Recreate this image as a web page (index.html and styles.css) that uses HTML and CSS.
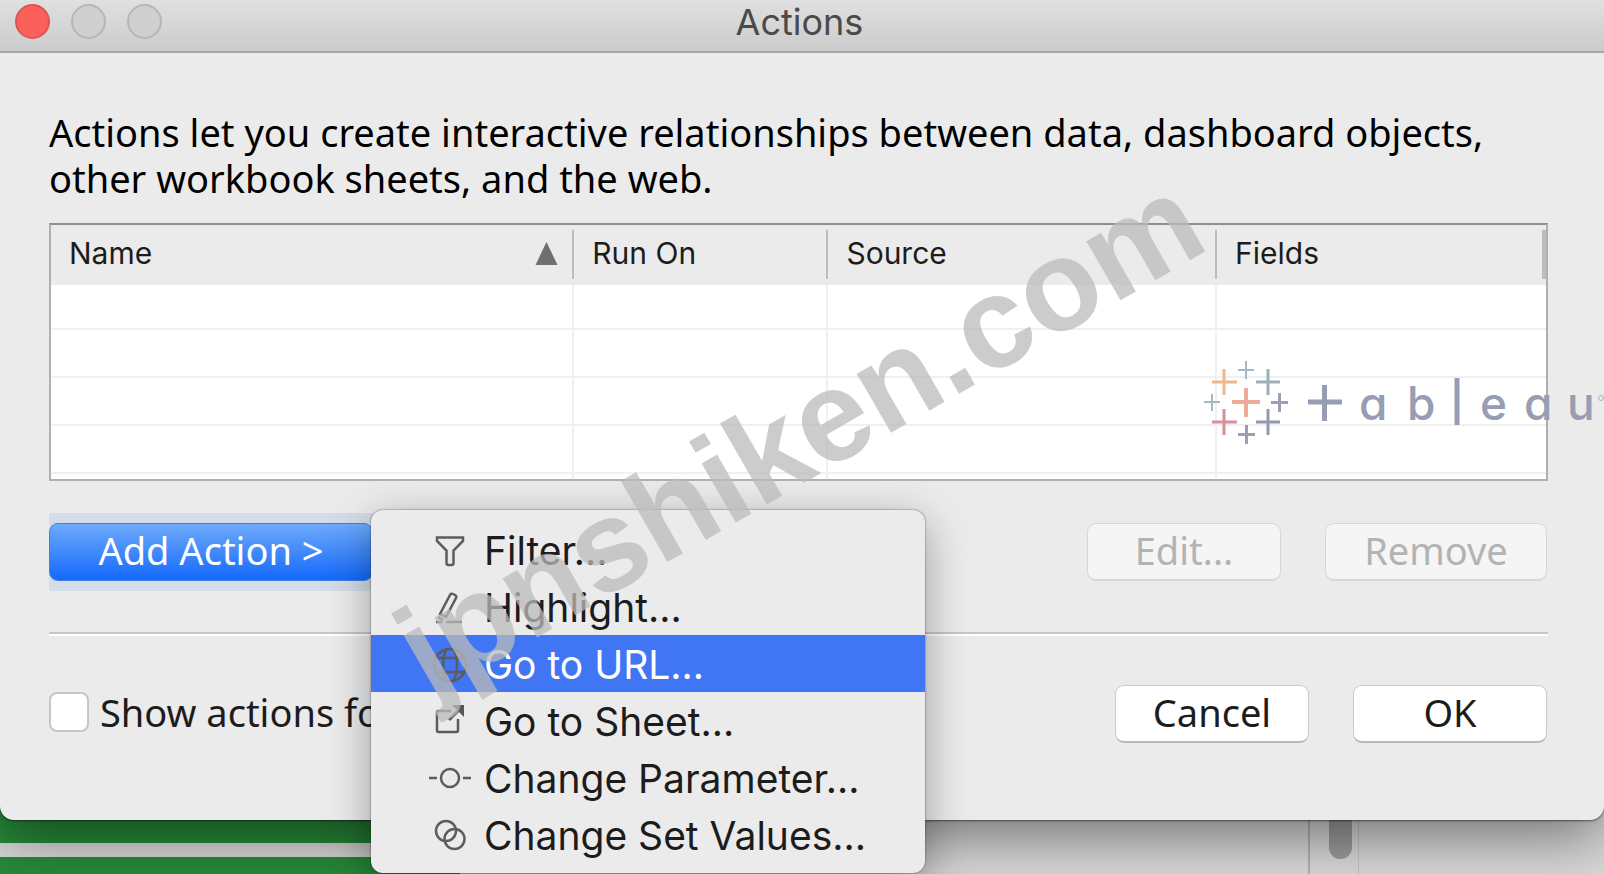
FILE: index.html
```html
<!DOCTYPE html>
<html lang="en">
<head>
<meta charset="utf-8">
<title>Actions</title>
<link rel="stylesheet" href="styles.css">
</head>
<body>
<div class="screen">
  <main class="window">
    <header class="titlebar">
      <div class="lights">
        <button class="light light-close" type="button" aria-label="Close"></button>
        <button class="light" type="button" aria-label="Minimize" disabled></button>
        <button class="light" type="button" aria-label="Zoom" disabled></button>
      </div>
      <h1 class="title">Actions</h1>
    </header>
    <div class="content">
      <p class="intro">Actions let you create interactive relationships between data, dashboard objects,<br>other workbook sheets, and the web.</p>
      <table class="actions">
        <colgroup><col class="col-name"><col class="col-run"><col class="col-source"><col class="col-fields"></colgroup>
        <thead>
          <tr>
            <th scope="col"><span class="sorted">Name <svg width="23" height="23" viewBox="0 0 23 23" aria-hidden="true"><path d="M11.500 0L22.500 23H.5z" fill="#6f6f6f"/></svg></span></th>
            <th scope="col">Run On</th>
            <th scope="col">Source</th>
            <th scope="col">Fields</th>
          </tr>
        </thead>
        <tbody>
          <tr class="short"><td></td><td></td><td></td><td></td></tr>
          <tr><td></td><td></td><td></td><td></td></tr>
          <tr><td></td><td></td><td></td><td></td></tr>
          <tr><td></td><td></td><td></td><td></td></tr>
          <tr class="last"><td></td><td></td><td></td><td></td></tr>
        </tbody>
      </table>
      <div class="toolbar">
        <div class="add">
          <button class="btn btn-primary" type="button">Add Action &gt;</button>
          <div class="menu" role="menu">
            <button class="item" type="button" role="menuitem">
              <svg class="icon" viewBox="0 0 44 44" aria-hidden="true"><path d="M9 8.500h26v3.500l-9.500 9.500V34q0 2-2 2h-3q-2 0-2-2V21.500L9 12z"/></svg>
              <span>Filter...</span></button>
            <button class="item" type="button" role="menuitem">
              <svg class="icon" viewBox="0 0 44 44" aria-hidden="true"><path d="M12 28l10-19q1-2 3-1l2 1q2 1 1 3L18 31zM10 31l5 3M8 36h6M18 36h16"/></svg>
              <span>Highlight...</span></button>
            <button class="item item-active" type="button" role="menuitem">
              <svg class="icon" viewBox="0 0 44 44" aria-hidden="true"><circle cx="22" cy="22" r="16"/><path d="M8 15h28M8 29h28M18 6.500q-6 15.500 0 31M26 6.500q6 15.500 0 31"/></svg>
              <span>Go to URL...</span></button>
            <button class="item" type="button" role="menuitem">
              <svg class="icon" viewBox="0 0 44 44" aria-hidden="true"><path d="M23 11H10.500q-1.500 0-1.500 1.500v18q0 1.500 1.500 1.500h18q1.500 0 1.500-1.500V19"/><path d="M21 20L32 9" stroke-width="3"/><path d="M24 5h12v12z" fill="#555" stroke="none"/></svg>
              <span>Go to Sheet...</span></button>
            <button class="item" type="button" role="menuitem">
              <svg class="icon" viewBox="0 0 44 44" aria-hidden="true"><circle cx="22" cy="21" r="9"/><path d="M1 21h8M35 21h8"/></svg>
              <span>Change Parameter...</span></button>
            <button class="item" type="button" role="menuitem">
              <svg class="icon" viewBox="0 0 44 44" aria-hidden="true"><circle cx="18" cy="17" r="10"/><circle cx="26.500" cy="25" r="10"/></svg>
              <span>Change Set Values...</span></button>
          </div>
        </div>
        <div class="group">
          <button class="btn" type="button" disabled>Edit...</button>
          <button class="btn btn-wide" type="button" disabled>Remove</button>
        </div>
      </div>
      <hr class="rule">
      <div class="footer">
        <label class="check"><input type="checkbox"><span>Show actions for</span></label>
        <div class="group">
          <button class="btn" type="button">Cancel</button>
          <button class="btn" type="button">OK</button>
        </div>
      </div>
    </div>
  </main>
  <div class="behind">
    <div class="bands"><div class="band-top"></div><div class="band-bottom"></div></div>
    <div class="track"><div class="thumb"></div></div>
  </div>
  <svg class="logo" width="400" height="100" viewBox="1204 352 400 100" role="img" aria-label="tableau">
    <g fill="none">
      <path stroke="#a6b9c0" stroke-width="2" d="M1238 370h16M1246 361v18M1204 402h16M1212 394v17"/>
      <path stroke="#efb78f" stroke-width="3" d="M1212 382h25M1224 369v26"/>
      <path stroke="#9db0b9" stroke-width="3" d="M1256 382h24M1268 369v26"/>
      <path stroke="#f0ab97" stroke-width="4" d="M1232 402h28M1246 388v29"/>
      <path stroke="#9b9fb6" stroke-width="3" d="M1271 402.500h17M1279.500 393v19M1238 434.500h17M1246.500 425v19"/>
      <path stroke="#d79098" stroke-width="3" d="M1212 422h25M1224 409v26"/>
      <path stroke="#9299b1" stroke-width="3" d="M1256 422h24M1268 409v26"/>
      <path stroke="#979db2" stroke-width="5" d="M1308 402h34M1324.500 385v36M1457 378v47"/>
      <circle cx="1601" cy="398" r="2.500" stroke="#a9aec0"/>
    </g>
    <text class="wordmark" x="1359 1407 1480 1524 1567" y="420">abeau</text>
  </svg>
  <div class="watermark">jpnshiken.com</div>
</div>
</body>
</html>
```
FILE: styles.css
```css
* { box-sizing: border-box; }
body { margin: 0; background: #c8c8c8; }
button, input { font: inherit; margin: 0; }

.screen {
  position: relative;
  display: flex;
  flex-direction: column;
  height: 100vh;
  overflow: hidden;
  font-family: "Noto Sans", "Open Sans", sans-serif;
  font-size: 38px;
  color: #1c1c1c;
}

.window {
  position: relative;
  z-index: 1;
  flex: none;
  background: #ebebeb;
  border-radius: 0 0 14px 14px;
  box-shadow: 0 1px 2px rgba(0, 0, 0, .5), 0 14px 60px rgba(0, 0, 0, .5);
}

.titlebar {
  display: grid;
  grid-template-columns: 1fr auto 1fr;
  align-items: center;
  height: 53px;
  padding: 0 20px 8px 15px;
  background: linear-gradient(#e0e0e0, #cbcbcb);
  border-bottom: 2px solid #a6a6a6;
}
.lights { display: flex; gap: 21px; }
.light {
  width: 35px;
  height: 35px;
  padding: 0;
  border: 2px solid #b6b6b6;
  border-radius: 50%;
  background: #cfcfcf;
}
.light-close { background: #fc605b; border-color: #dd5550; }
.title {
  margin: 0;
  font: 400 36px/40px Inter, sans-serif;
  color: #4a4a4a;
}

.content { padding: 56px 56px 77px 49px; }
.intro { margin: 0; line-height: 46px; color: #000; }

.actions {
  width: 100%;
  margin-top: 22px;
  table-layout: fixed;
  border-collapse: separate;
  border-spacing: 0;
  border: 2px solid #b0b0b0;
  border-top-color: #8e8e8e;
  background: #fff;
}
.col-name { width: 35%; }
.col-run { width: 17%; }
.col-source { width: 26%; }
.col-fields { width: 22%; }
.actions th {
  height: 60px;
  padding: 0 16px 4px 18px;
  text-align: left;
  font: 400 30px/36px Inter, sans-serif;
  background: linear-gradient(#bdbdbd, #bdbdbd) right 5px / 2px 49px no-repeat #ebebeb;
}
.actions th:last-child { background-size: 4px 49px; }
.sorted { display: flex; justify-content: space-between; align-items: center; }
.actions td {
  height: 48px;
  padding: 0;
  border-right: 2px solid #f0f0f0;
  border-bottom: 2px solid #f0f0f0;
}
.actions td:last-child { border-right: 0; }
.actions .short td { height: 45px; }
.actions .last td { height: 5px; border-bottom: 0; }

.toolbar, .footer { display: flex; justify-content: space-between; align-items: center; }
.toolbar { margin-top: 32px; }
.add { position: relative; padding: 10px 0; background: #d3dce8; }
.group { display: flex; gap: 44px; padding-right: 1px; }
.btn {
  min-width: 194px;
  height: 58px;
  padding: 0 20px 4px;
  border: 1px solid #c9c9c9;
  border-bottom: 2px solid #b9b9b9;
  border-radius: 9px;
  background: #fff;
  color: #1c1c1c;
  line-height: 50px;
}
.btn:disabled { background: #f5f5f5; border-color: #d6d6d6; color: #b3b3b3; }
.btn-wide { min-width: 222px; }
.btn-primary {
  min-width: 324px;
  border: 1px solid #3f7fe0;
  background: linear-gradient(#6eaafb, #1469fb);
  color: #fff;
}

.menu {
  position: absolute;
  left: 322px;
  top: -3px;
  width: 554px;
  padding: 11px 0 10px;
  border-radius: 12px;
  background: #ebebeb;
  box-shadow: 0 0 2px rgba(0, 0, 0, .6), 0 12px 44px rgba(0, 0, 0, .35);
}
.item {
  display: flex;
  align-items: center;
  gap: 12px;
  width: 100%;
  height: 57px;
  padding: 2px 0 0 57px;
  border: 0;
  background: none;
  color: #1c1c1c;
  font: 400 39px/48px Inter, sans-serif;
  text-align: left;
  white-space: nowrap;
}
.item-active { background: #4075f4; color: #fff; }
.icon {
  flex: none;
  width: 44px;
  height: 44px;
  fill: none;
  stroke: #5c5c5c;
  stroke-width: 2.5;
}

.rule { height: 4px; margin: 41px 0 0; border: 0; border-top: 2px solid #c6c6c6; background: #fff; }
.footer { margin-top: 49px; }
.check { display: flex; align-items: center; gap: 11px; padding-bottom: 4px; }
.check input {
  appearance: none;
  width: 40px;
  height: 40px;
  border: 2px solid #c6c6c6;
  border-radius: 8px;
  background: #fff;
}

.behind {
  flex: 1;
  display: flex;
  justify-content: space-between;
  margin-top: -16px;
  padding-right: 245px;
  background: #d8d8d8;
}
.bands { display: flex; flex-direction: column; gap: 14px; width: 460px; }
.band-top { height: 39px; background: #278a3a; }
.band-bottom { flex: 1; background: #278a3a; }
.track {
  width: 51px;
  padding-left: 19px;
  border-left: 2px solid #b0b0b0;
  border-right: 1px solid #c4c4c4;
}
.thumb { width: 23px; height: 55px; border-radius: 0 0 12px 12px; background: #9c9c9c; }

.logo { position: absolute; z-index: 2; right: 0; top: 352px; }
.wordmark {
  font: 500 46px Inter, sans-serif;
  font-feature-settings: "cv11";
  fill: #979db2;
}
.watermark {
  position: absolute;
  z-index: 3;
  left: 430px;
  top: 589px;
  font: 700 129px/130px "Liberation Sans", Arial, sans-serif;
  color: rgba(187, 187, 187, .75);
  transform: rotate(-30deg);
  transform-origin: 0 110px;
  white-space: nowrap;
  pointer-events: none;
}
```
